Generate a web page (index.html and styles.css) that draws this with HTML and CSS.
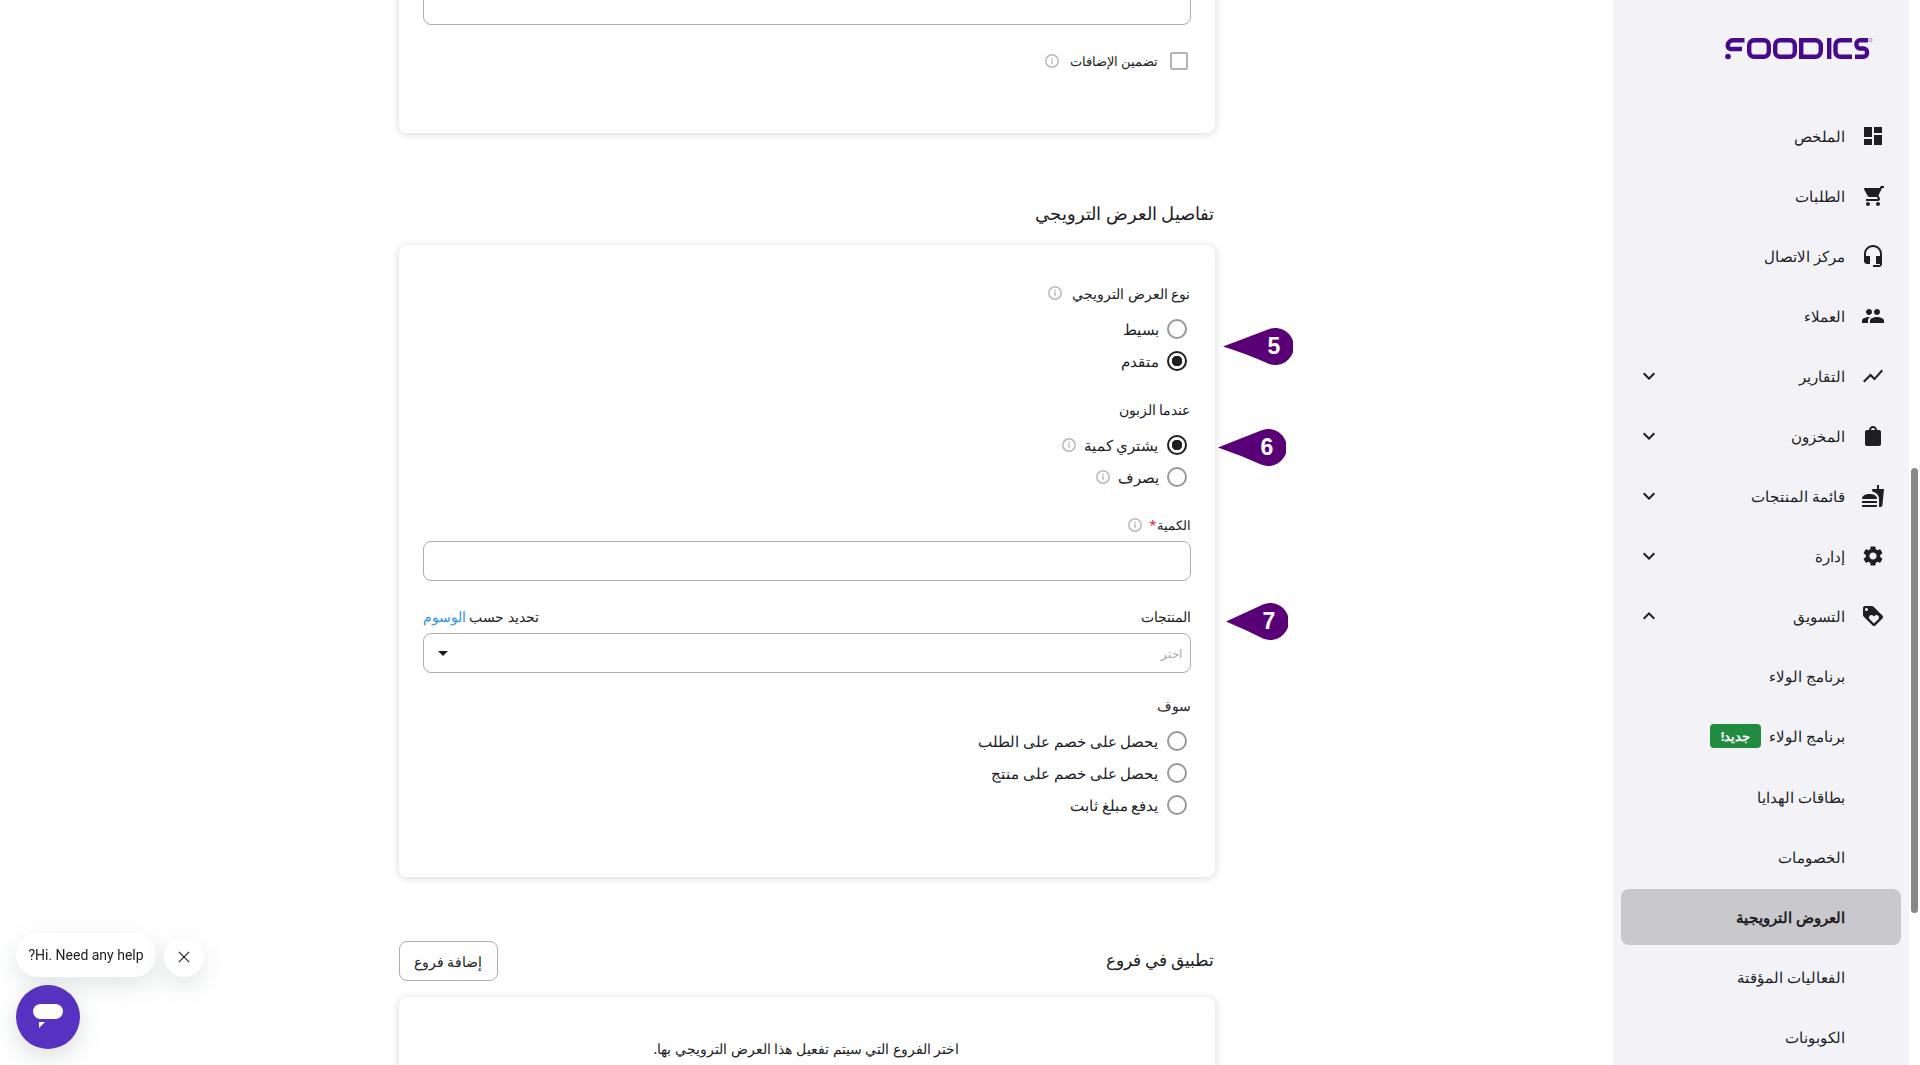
FILE: index.html
```html
<!DOCTYPE html>
<html lang="ar" dir="rtl">
<head>
<meta charset="utf-8">
<title>Foodics</title>
<link rel="stylesheet" href="styles.css">
</head>
<body>
<div class="app">
  <div class="side-wrap">
    <aside class="sidebar">
      <div class="logo-row">
        <svg class="logo" width="148" height="24" viewBox="0 0 148 24" fill="none" stroke="#470a8f" stroke-width="4.4">
          <path d="M19.5 3.2H8A5.2 5.2 0 0 0 2.8 8.4V9.2A3 3 0 0 0 5.8 12H17"/>
          <circle cx="3" cy="19.5" r="2.8" fill="#470a8f" stroke="none"/>
          <rect x="24.2" y="3.2" width="19.6" height="16.6" rx="5"/>
          <rect x="50.2" y="3.2" width="19.6" height="16.6" rx="5"/>
          <path d="M76.2 3.2H90A5.5 5.5 0 0 1 95.8 8.7V14.3A5.5 5.5 0 0 1 90 19.8H76.2Z"/>
          <path d="M104.2 1V22"/>
          <path d="M127 3.2H115.5A5 5 0 0 0 110.5 8.2V14.8A5 5 0 0 0 115.5 19.8H127"/>
          <path d="M143 3.2H135A3.5 3.5 0 0 0 131.500 6.700V8A3.500 3.500 0 0 0 135 11.500H138.500A3.500 3.500 0 0 1 142 15V16.300A3.500 3.500 0 0 1 138.500 19.800H130"/>
          <circle cx="145.500" cy="3" r="1.600" stroke="#9a6fc6" stroke-width=".9"/>
        </svg>
      </div>
      <nav class="nav">
        <a class="nav-item"><svg class="nav-icon" viewBox="0 0 24 24"><path d="M3 13h8V3H3v10zm0 8h8v-6H3v6zm10 0h8V11h-8v10zm0-18v6h8V3h-8z"/></svg><span>الملخص</span></a>
        <a class="nav-item"><svg class="nav-icon mirror" viewBox="0 0 24 24"><path d="M7 18c-1.100 0-1.990.900-1.990 2S5.900 22 7 22s2-.900 2-2-.900-2-2-2zM1 2v2h2l3.600 7.590-1.350 2.450c-.160.280-.250.610-.250.960 0 1.100.900 2 2 2h12v-2H7.420c-.140 0-.250-.110-.250-.250l.030-.120.900-1.630h7.450c.750 0 1.410-.410 1.750-1.030l3.580-6.490c.080-.140.120-.310.120-.480 0-.550-.450-1-1-1H5.210l-.940-2H1zm16 16c-1.100 0-1.990.900-1.990 2s.890 2 1.990 2 2-.900 2-2-.900-2-2-2z"/></svg><span>الطلبات</span></a>
        <a class="nav-item"><svg class="nav-icon" viewBox="0 0 24 24"><path d="M12 1c-4.970 0-9 4.030-9 9v7c0 1.660 1.340 3 3 3h3v-8H5v-2c0-3.870 3.130-7 7-7s7 3.130 7 7v2h-4v8h4v1h-7v2h6c1.660 0 3-1.340 3-3V10c0-4.970-4.030-9-9-9z"/></svg><span>مركز الاتصال</span></a>
        <a class="nav-item"><svg class="nav-icon mirror" viewBox="0 0 24 24"><path d="M16 11c1.660 0 2.990-1.340 2.990-3S17.660 5 16 5c-1.660 0-3 1.340-3 3s1.340 3 3 3zm-8 0c1.660 0 2.990-1.340 2.990-3S9.660 5 8 5C6.340 5 5 6.340 5 8s1.340 3 3 3zm0 2c-2.330 0-7 1.170-7 3.500V19h14v-2.500c0-2.330-4.670-3.500-7-3.500zm8 0c-.290 0-.620.020-.970.050 1.160.840 1.970 1.970 1.970 3.450V19h6v-2.500c0-2.330-4.670-3.500-7-3.500z"/></svg><span>العملاء</span></a>
        <a class="nav-item"><svg class="nav-icon" viewBox="0 0 24 24"><path d="M3.500 18.490l6-6.010 4 4L22 6.920l-1.410-1.410-7.090 7.970-4-4L2 16.990z"/></svg><span>التقارير</span><svg class="chev" viewBox="0 0 24 24"><path d="M16.590 8.590L12 13.170 7.410 8.590 6 10l6 6 6-6z"/></svg></a>
        <a class="nav-item"><svg class="nav-icon" viewBox="0 0 24 24"><path d="M18 6h-2c0-2.210-1.790-4-4-4S8 3.790 8 6H6c-1.100 0-2 .900-2 2v12c0 1.100.900 2 2 2h12c1.100 0 2-.900 2-2V8c0-1.100-.900-2-2-2zm-6-2c1.100 0 2 .900 2 2h-4c0-1.100.900-2 2-2z"/></svg><span>المخزون</span><svg class="chev" viewBox="0 0 24 24"><path d="M16.590 8.590L12 13.170 7.410 8.590 6 10l6 6 6-6z"/></svg></a>
        <a class="nav-item"><svg class="nav-icon" viewBox="0 0 24 24"><path d="M18.060 22.990h1.660c.840 0 1.530-.640 1.630-1.460L23 5.050h-5V1h-1.970v4.050h-4.970l.300 2.340c1.710.470 3.310 1.320 4.270 2.260 1.440 1.420 2.430 2.890 2.430 5.290v8.050zM1 21.990V21h15.030v.990c0 .550-.450 1-1.010 1H2.010c-.560 0-1.010-.450-1.010-1zm15.030-7c.080-4.020-4.220-5-7.520-5S1 10.990 1 14.990h15.030zM1 17h15v2H1z"/></svg><span>قائمة المنتجات</span><svg class="chev" viewBox="0 0 24 24"><path d="M16.590 8.590L12 13.170 7.410 8.590 6 10l6 6 6-6z"/></svg></a>
        <a class="nav-item"><svg class="nav-icon" viewBox="0 0 24 24"><path d="M19.140 12.940c.040-.300.060-.610.060-.940 0-.320-.020-.640-.070-.940l2.030-1.580c.180-.140.230-.410.120-.610l-1.920-3.320c-.120-.220-.370-.290-.590-.220l-2.390.960c-.500-.380-1.030-.700-1.620-.940L14.400 2.810c-.040-.240-.240-.410-.480-.410h-3.840c-.240 0-.430.170-.470.410L9.250 5.350c-.590.240-1.130.570-1.620.940L5.240 5.330c-.220-.080-.470 0-.590.220L2.740 8.870c-.120.210-.080.470.120.610l2.030 1.580c-.050.300-.090.630-.090.940s.020.640.070.940l-2.030 1.580c-.180.140-.230.410-.120.610l1.920 3.320c.120.220.370.290.590.220l2.390-.960c.500.380 1.030.700 1.620.940l.360 2.540c.050.240.240.410.480.410h3.840c.240 0 .440-.170.470-.410l.360-2.540c.590-.240 1.130-.560 1.620-.940l2.390.960c.220.080.470 0 .590-.220l1.920-3.320c.120-.220.070-.470-.120-.610l-2.010-1.580zM12 15.600c-1.980 0-3.600-1.620-3.600-3.600s1.620-3.600 3.600-3.600 3.600 1.620 3.600 3.600-1.620 3.600-3.600 3.600z"/></svg><span>إدارة</span><svg class="chev" viewBox="0 0 24 24"><path d="M16.590 8.590L12 13.170 7.410 8.590 6 10l6 6 6-6z"/></svg></a>
        <a class="nav-item"><svg class="nav-icon" viewBox="0 0 24 24"><path d="M21.410 11.580l-9-9C12.050 2.220 11.550 2 11 2H4c-1.100 0-2 .900-2 2v7c0 .550.220 1.050.590 1.420l9 9c.360.360.860.580 1.410.580s1.050-.220 1.410-.590l7-7c.370-.360.590-.860.590-1.410s-.230-1.060-.590-1.420zM5.500 7C4.670 7 4 6.330 4 5.500S4.670 4 5.500 4 7 4.670 7 5.500 6.330 7 5.500 7zm11.770 8.270L13 19.540l-4.270-4.270C8.280 14.810 8 14.190 8 13.500c0-1.380 1.120-2.500 2.500-2.500.690 0 1.320.280 1.770.740l.730.720.730-.730c.450-.450 1.080-.730 1.770-.730 1.380 0 2.500 1.120 2.500 2.500 0 .690-.280 1.320-.730 1.770z"/></svg><span>التسويق</span><svg class="chev" viewBox="0 0 24 24"><path d="M12 8l-6 6 1.410 1.410L12 10.830l4.590 4.580L18 14z"/></svg></a>
        <a class="nav-item sub"><span>برنامج الولاء</span></a>
        <a class="nav-item sub"><span>برنامج الولاء</span><b class="badge">جديد!</b></a>
        <a class="nav-item sub"><span>بطاقات الهدايا</span></a>
        <a class="nav-item sub"><span>الخصومات</span></a>
        <a class="nav-item sub active"><span>العروض الترويجية</span></a>
        <a class="nav-item sub"><span>الفعاليات المؤقتة</span></a>
        <a class="nav-item sub"><span>الكوبونات</span></a>
      </nav>
    </aside>
    <div class="scroll-thumb"></div>
  </div>

  <main class="main">
    <div class="column">
      <section class="card card-top">
        <div class="input"></div>
        <label class="check-row">
          <span class="checkbox"></span>
          <span>تضمين الإضافات</span>
          <svg class="info" viewBox="0 0 14 14"><circle cx="7" cy="7" r="6.200"/><rect x="6.300" y="6" width="1.400" height="4.300"/><rect x="6.300" y="3.700" width="1.400" height="1.400"/></svg>
        </label>
      </section>

      <div class="section-head"><h2>تفاصيل العرض الترويجي</h2></div>
      <section class="card card-form">
        <div class="label-row"><span>نوع العرض الترويجي</span><svg class="info" viewBox="0 0 14 14"><circle cx="7" cy="7" r="6.200"/><rect x="6.300" y="6" width="1.400" height="4.300"/><rect x="6.300" y="3.700" width="1.400" height="1.400"/></svg></div>
        <div class="radios">
          <div class="radio-row"><span class="radio"></span><span>بسيط</span></div>
          <div class="radio-row"><span class="radio on"></span><span>متقدم</span></div>
        </div>
        <div class="label-row"><span>عندما الزبون</span></div>
        <div class="radios">
          <div class="radio-row"><span class="radio on"></span><span>يشتري كمية</span><svg class="info" viewBox="0 0 14 14"><circle cx="7" cy="7" r="6.200"/><rect x="6.300" y="6" width="1.400" height="4.300"/><rect x="6.300" y="3.700" width="1.400" height="1.400"/></svg></div>
          <div class="radio-row"><span class="radio"></span><span>يصرف</span><svg class="info" viewBox="0 0 14 14"><circle cx="7" cy="7" r="6.200"/><rect x="6.300" y="6" width="1.400" height="4.300"/><rect x="6.300" y="3.700" width="1.400" height="1.400"/></svg></div>
        </div>
        <div class="label-row tight"><span>الكمية<i class="req">*</i></span><svg class="info" viewBox="0 0 14 14"><circle cx="7" cy="7" r="6.200"/><rect x="6.300" y="6" width="1.400" height="4.300"/><rect x="6.300" y="3.700" width="1.400" height="1.400"/></svg></div>
        <div class="input"></div>
        <div class="label-row split"><span>المنتجات</span><span>تحديد حسب <a class="link">الوسوم</a></span></div>
        <div class="input select"><span class="placeholder">اختر</span><span class="caret"></span></div>
        <div class="label-row"><span>سوف</span></div>
        <div class="radios">
          <div class="radio-row"><span class="radio"></span><span>يحصل على خصم على الطلب</span></div>
          <div class="radio-row"><span class="radio"></span><span>يحصل على خصم على منتج</span></div>
          <div class="radio-row"><span class="radio"></span><span>يدفع مبلغ ثابت</span></div>
        </div>
        <div class="callout c5"><svg width="70" height="37" viewBox="0 0 70 37"><path d="M0 18.500L45 1.500A18.500 18.500 0 1 1 45 35.500Q24 26 0 18.500Z"/></svg><span>5</span></div>
        <div class="callout c6"><svg width="68" height="37" viewBox="0 0 68 37"><path d="M0 18.500L43 1.500A18.500 18.500 0 1 1 43 35.500Q22 26 0 18.500Z"/></svg><span>6</span></div>
        <div class="callout c7"><svg width="62" height="37" viewBox="0 0 62 37"><path d="M0 18.500L37 1.500A18.500 18.500 0 1 1 37 35.500Q18 26 0 18.500Z"/></svg><span>7</span></div>
      </section>

      <div class="section-head tall"><h2>تطبيق في فروع</h2><button class="btn">إضافة فروع</button></div>
      <section class="card card-branch"><p>اختر الفروع التي سيتم تفعيل هذا العرض الترويجي بها.</p></section>
    </div>
  </main>
</div>

<div class="chat">
  <div class="chat-top">
    <button class="chat-close"><svg viewBox="0 0 14 14" width="12" height="12"><path d="M1 1L13 13M13 1L1 13" stroke="#222" stroke-width="1.400" fill="none"/></svg></button>
    <div class="chat-bubble">Hi. Need any help?</div>
  </div>
  <button class="chat-btn"><svg width="34" height="28" viewBox="0 0 34 28"><rect x="2" y="1" width="30" height="15" rx="7.500" fill="#fff"/><path d="M8 19H14L8 25Z" fill="#fff"/></svg></button>
</div>
</body>
</html>
```
FILE: styles.css
```css
* { box-sizing: border-box; }
html, body { margin: 0; height: 100%; }
body {
  font-family: "Noto Sans", "Liberation Sans", sans-serif;
  font-size: 14px;
  color: #212124;
  background: #fff;
  overflow: hidden;
}
.app { display: flex; height: 1065px; overflow: hidden; }

.side-wrap { position: relative; flex: 0 0 307px; padding-right: 11px; }
.sidebar { height: 1065px; width: 296px; background: #f2f2f7; overflow: hidden; font-size: 15px; }
.scroll-thumb { position: absolute; right: 2px; top: 468px; width: 7px; height: 445px; border-radius: 4px; background: #888; }
.logo-row { height: 106px; padding: 37px 36px 0 0; }
.logo { display: block; }
.nav { display: flex; flex-direction: column; }
.nav-item { display: flex; align-items: center; height: 60.050px; padding: 0 24px 0 0; position: relative; }
.nav-icon { width: 24px; height: 24px; fill: #1f1f21; margin-left: 16px; flex: none; }
.mirror { transform: scaleX(-1); }
.chev { width: 24px; height: 24px; fill: #1f1f21; margin-right: auto; margin-left: 24px; }
.sub { padding-right: 64px; }
.active { font-weight: 700; }
.active::before { content: ""; position: absolute; z-index: 0; inset: 2px 8px; background: #c9c9cd; border-radius: 8px; }
.active span { position: relative; }
.badge { margin-right: 8px; background: #218c3f; color: #fff; border-radius: 4px; font-size: 13px; height: 24px; line-height: 24px; width: 51px; text-align: center; }

.main { flex: 1; min-width: 0; }
.column { width: 816px; margin: 0 auto; }
.card { background: #fff; border-radius: 8px; box-shadow: 0 1px 8px rgba(0,0,0,.16); padding: 0 24px; }
.card-top { margin-top: -15px; height: 148px; }
.input { height: 40px; border: 1px solid #adadb0; border-radius: 8px; }
.check-row { display: flex; align-items: center; gap: 9px; margin-top: 26px; height: 20px; padding-right: 3px; font-size: 13px; }
.checkbox { width: 18px; height: 18px; border: 2px solid #b4b4b8; border-radius: 2px; margin-left: 2px; }
.info { width: 14px; height: 14px; flex: none; margin-right: 2px; }
.info circle { fill: none; stroke: #b8b8ba; stroke-width: 1.500; }
.info rect { fill: #b8b8ba; }

.section-head { display: flex; align-items: center; justify-content: space-between; height: 32px; margin: 64px 0 16px; }
.section-head.tall { height: 40px; }
.section-head.tall h2 { font-size: 17px; padding-bottom: 3px; }
h2 { margin: 0; font-size: 18px; font-weight: 400; }
.btn { height: 40px; width: 99px; background: #fff; border: 1px solid #adadb0; border-radius: 8px; font: inherit; color: inherit; padding: 0; }

.card-form { height: 632px; padding-top: 38px; position: relative; }
.label-row { display: flex; align-items: center; gap: 8px; height: 20px; }
.label-row.split { justify-content: space-between; margin-top: 25px; margin-bottom: 7px; }
.label-row.tight { margin-bottom: 6px; gap: 5px; font-size: 13px; }
.req { color: #e0103a; font-style: normal; }
.link { color: #2f8fe8; }
.radios { margin: 10px 0 22px; font-size: 15px; }
.radio-row { display: flex; align-items: center; height: 32px; padding-right: 4px; gap: 8px; }
.radio-row .info { margin-right: 0; }
.radio { width: 20px; height: 20px; border: 2px solid #98989c; border-radius: 50%; flex: none; }
.radio.on { border-color: #1f1f21; background: radial-gradient(circle, #1f1f21 0 5px, #fff 5.500px); }

.select { display: flex; align-items: center; justify-content: space-between; padding: 0 8px 0 14px; margin-bottom: 22px; }
.placeholder { color: #aaa; font-size: 12px; }
.caret { width: 0; height: 0; border: 5px solid transparent; border-top: 5px solid #1f1f21; border-bottom: 0; }

.callout { position: absolute; height: 37px; }
.callout svg { display: block; fill: #5a0077; }
.callout span {
  position: absolute; right: 0; top: 0; width: 37px; height: 37px; text-align: center;
  color: #fff; font: 700 23px/37px "Liberation Sans", sans-serif;
}
.c5 { left: 824px; top: 83px; width: 70px; }
.c6 { left: 819px; top: 184px; width: 68px; }
.c7 { left: 827px; top: 358px; width: 62px; }

.card-branch { padding-top: 42px; text-align: center; height: 120px; }
.card-branch p { margin: 0; }

.chat { position: fixed; left: 16px; top: 933px; width: 190px; direction: ltr; }
.chat-top { display: flex; gap: 8px; align-items: flex-start; }
.chat-bubble { direction: rtl; background: #fff; border-radius: 22px; height: 44px; width: 140px; text-align: center; font: 14px/44px Roboto, sans-serif; box-shadow: 0 8px 24px rgba(90,110,110,.18); order: -1; }
.chat-close { width: 40px; height: 40px; margin-top: 4px; border: 0; border-radius: 50%; background: #fff; padding: 0; display: flex; align-items: center; justify-content: center; box-shadow: 0 8px 24px rgba(90,110,110,.18); }
.chat-btn { display: flex; align-items: center; justify-content: center; width: 64px; height: 64px; margin-top: 8px; border: 0; padding: 0; border-radius: 50%; background: #5731c2; box-shadow: 0 8px 24px rgba(90,110,110,.22); }
```
